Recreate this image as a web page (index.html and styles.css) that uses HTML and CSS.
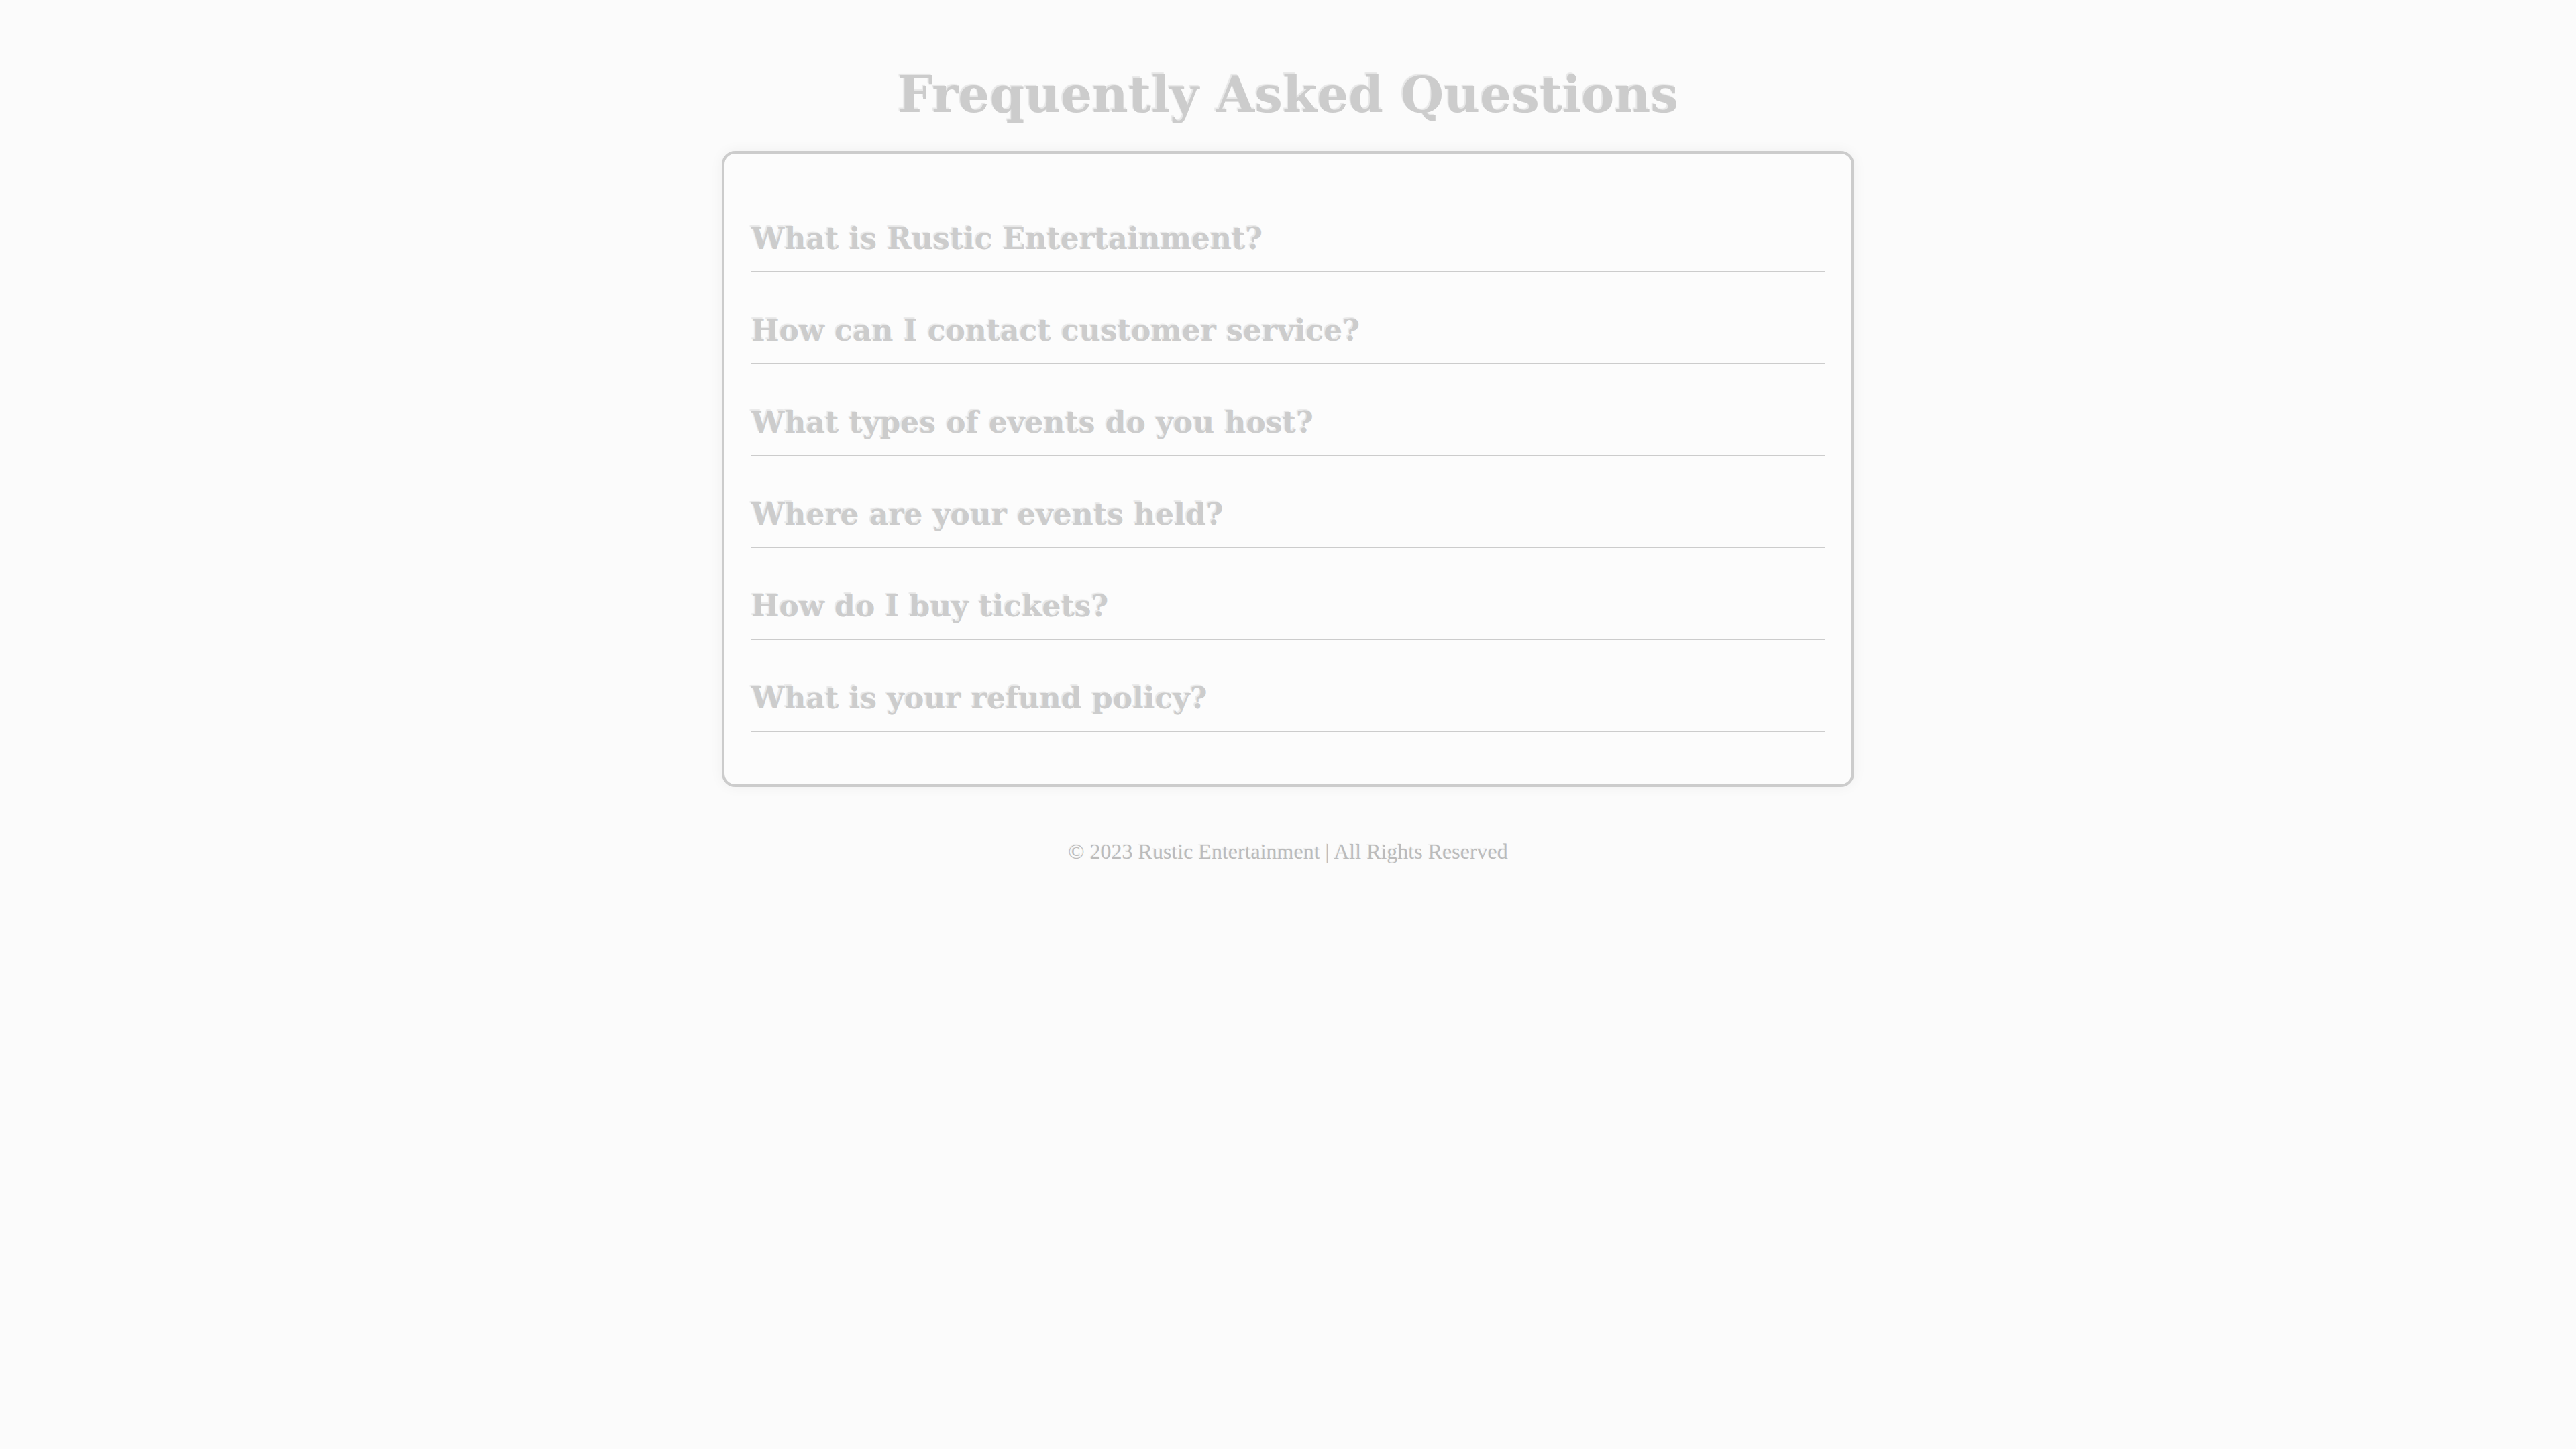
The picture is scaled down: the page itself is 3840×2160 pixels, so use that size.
FILE: index.html
```html
<!DOCTYPE html>
<html lang="en">
<head>
    <meta charset="UTF-8">
    <meta name="viewport" content="width=device-width, initial-scale=1.0">
    <title>FAQ - Rustic Entertainment</title>
    <link rel="stylesheet" href="styles.css">
</head>
<body>

<div class="page">
    <h1>Frequently Asked Questions</h1>

    <!-- Questions -->
    <div class="faq-card">
        <div class="faq-item">
            <h3 class="faq-question">What is Rustic Entertainment?</h3>
        </div>
        <div class="faq-item">
            <h3 class="faq-question">How can I contact customer service?</h3>
        </div>
        <div class="faq-item">
            <h3 class="faq-question">What types of events do you host?</h3>
        </div>
        <div class="faq-item">
            <h3 class="faq-question">Where are your events held?</h3>
        </div>
        <div class="faq-item">
            <h3 class="faq-question">How do I buy tickets?</h3>
        </div>
        <div class="faq-item">
            <h3 class="faq-question">What is your refund policy?</h3>
        </div>
    </div>

    <footer>
        <p>&copy; 2023 Rustic Entertainment | All Rights Reserved</p>
    </footer>
</div>

</body>
</html>
```

FILE: styles.css
```css
body {
    font-family: Georgia, 'DejaVu Serif', serif;
    background-color: #fbfbfb;
    color: #ccc;
    margin: 0;
    padding: 0;
}
.page {
    padding: 97px 40px;
}
h1 {
    text-align: center;
    font-size: 74px;
    line-height: 1.2;
    margin: 0 0 39px;
    text-shadow: -2px -2px 1px rgba(0, 0, 0, 0.08);
}
.faq-card {
    max-width: 1600px;
    margin: 0 auto;
    padding: 40px;
    background-color: #fcfcfc;
    border: 4px solid #ccc;
    border-radius: 20px;
    box-shadow: 0 0 20px rgba(0, 0, 0, 0.05);
}
.faq-item {
    margin-bottom: 38px;
}
.faq-question {
    font-size: 44px;
    line-height: 60px;
    margin: 57px 0 0;
    padding-bottom: 18px;
    border-bottom: 2px solid #ccc;
    text-shadow: -2px -2px 1px rgba(0, 0, 0, 0.08);
}
footer {
    text-align: center;
    margin-top: 74px;
}
footer p {
    margin: 0;
    font-family: Georgia, 'Liberation Serif', serif;
    font-size: 32px;
    line-height: 1.4;
    color: #bbb;
    text-shadow: -1px -1px 1px rgba(0, 0, 0, 0.06);
}
```
